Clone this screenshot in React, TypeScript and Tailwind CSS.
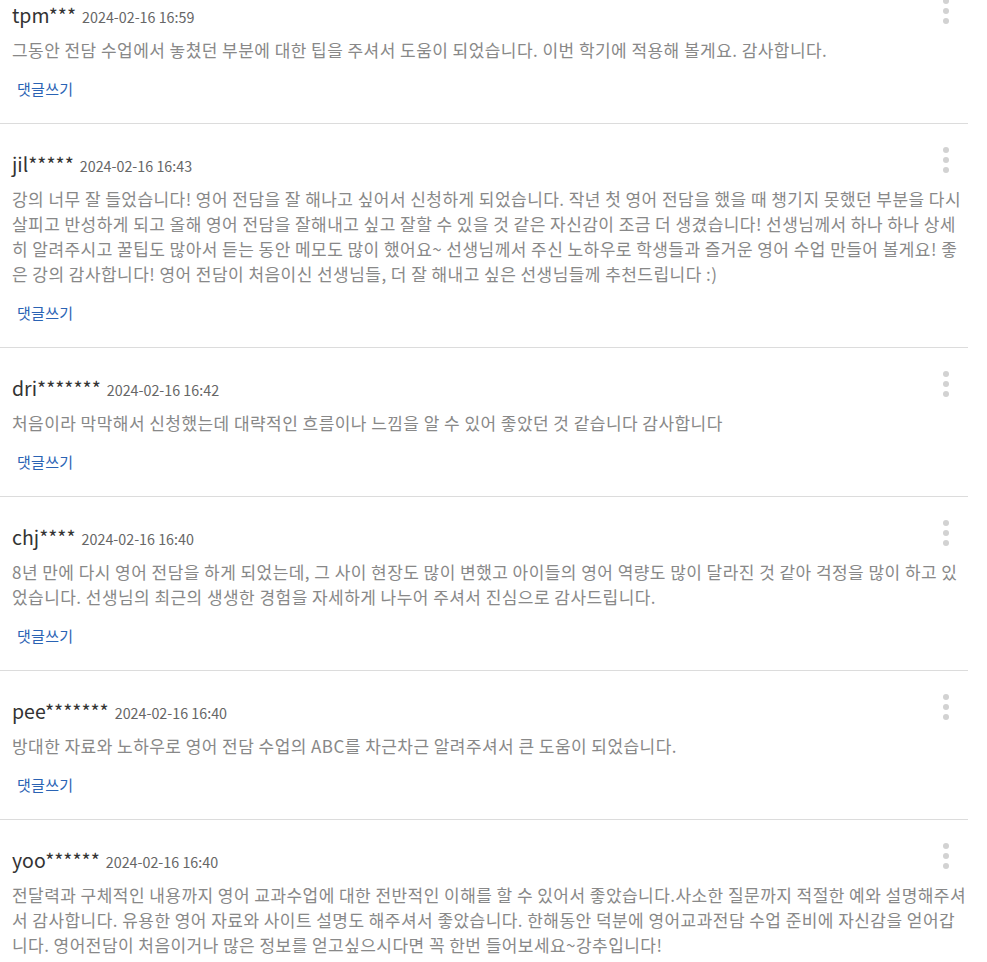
const reviews = [
  {
    name: 'tpm***',
    date: '2024-02-16 16:59',
    text: '그동안 전담 수업에서 놓쳤던 부분에 대한 팁을 주셔서 도움이 되었습니다. 이번 학기에 적용해 볼게요. 감사합니다.',
  },
  {
    name: 'jil*****',
    date: '2024-02-16 16:43',
    text: '강의 너무 잘 들었습니다! 영어 전담을 잘 해나고 싶어서 신청하게 되었습니다. 작년 첫 영어 전담을 했을 때 챙기지 못했던 부분을 다시 살피고 반성하게 되고 올해 영어 전담을 잘해내고 싶고 잘할 수 있을 것 같은 자신감이 조금 더 생겼습니다! 선생님께서 하나 하나 상세히 알려주시고 꿀팁도 많아서 듣는 동안 메모도 많이 했어요~ 선생님께서 주신 노하우로 학생들과 즐거운 영어 수업 만들어 볼게요! 좋은 강의 감사합니다! 영어 전담이 처음이신 선생님들, 더 잘 해내고 싶은 선생님들께 추천드립니다 :)',
  },
  {
    name: 'dri*******',
    date: '2024-02-16 16:42',
    text: '처음이라 막막해서 신청했는데 대략적인 흐름이나 느낌을 알 수 있어 좋았던 것 같습니다 감사합니다',
  },
  {
    name: 'chj****',
    date: '2024-02-16 16:40',
    text: '8년 만에 다시 영어 전담을 하게 되었는데, 그 사이 현장도 많이 변했고 아이들의 영어 역량도 많이 달라진 것 같아 걱정을 많이 하고 있었습니다. 선생님의 최근의 생생한 경험을 자세하게 나누어 주셔서 진심으로 감사드립니다.',
  },
  {
    name: 'pee*******',
    date: '2024-02-16 16:40',
    text: '방대한 자료와 노하우로 영어 전담 수업의 ABC를 차근차근 알려주셔서 큰 도움이 되었습니다.',
  },
  {
    name: 'yoo******',
    date: '2024-02-16 16:40',
    text: '전달력과 구체적인 내용까지 영어 교과수업에 대한 전반적인 이해를 할 수 있어서 좋았습니다.사소한 질문까지 적절한 예와 설명해주셔서 감사합니다. 유용한 영어 자료와 사이트 설명도 해주셔서 좋았습니다. 한해동안 덕분에 영어교과전담 수업 준비에 자신감을 얻어갑니다. 영어전담이 처음이거나 많은 정보를 얻고싶으시다면 꼭 한번 들어보세요~강추입니다!',
  },
]

const MoreDots = () => (
  <button className="absolute right-[19px] top-[23px] flex flex-col gap-[4px] p-0">
    <span className="block w-[6px] h-[6px] rounded-full bg-[#d2d2d2]" />
    <span className="block w-[6px] h-[6px] rounded-full bg-[#d2d2d2]" />
    <span className="block w-[6px] h-[6px] rounded-full bg-[#d2d2d2]" />
  </button>
)

const App = () => {
  return (
    <div
      className="w-[968px] -mt-[25px] bg-white"
      style={{ fontFamily: '"Noto Sans CJK KR", "Noto Sans", sans-serif' }}
    >
      <ul className="m-0 p-0">
        {reviews.map((r, i) => (
          <li key={i} className="relative border-b border-[#dcdcdc] pl-3 pt-[25px] pb-[24px]">
            <div className="flex items-baseline gap-[6px] h-[29px]">
              <span className="text-[19.5px] text-[#333] leading-[29px]">{r.name}</span>
              <span className="text-[14.3px] text-[#666]">{r.date}</span>
            </div>
            <p className="mt-[8px] text-[17px] leading-[25px] tracking-[0.45px] text-[#888]">{r.text}</p>
            <a className="block mt-[17px] pl-[5px] text-[15px] leading-[20px] tracking-[0.3px] text-[#2a63b4] cursor-pointer">
              댓글쓰기
            </a>
            <MoreDots />
          </li>
        ))}
      </ul>
    </div>
  )
}

export default App
